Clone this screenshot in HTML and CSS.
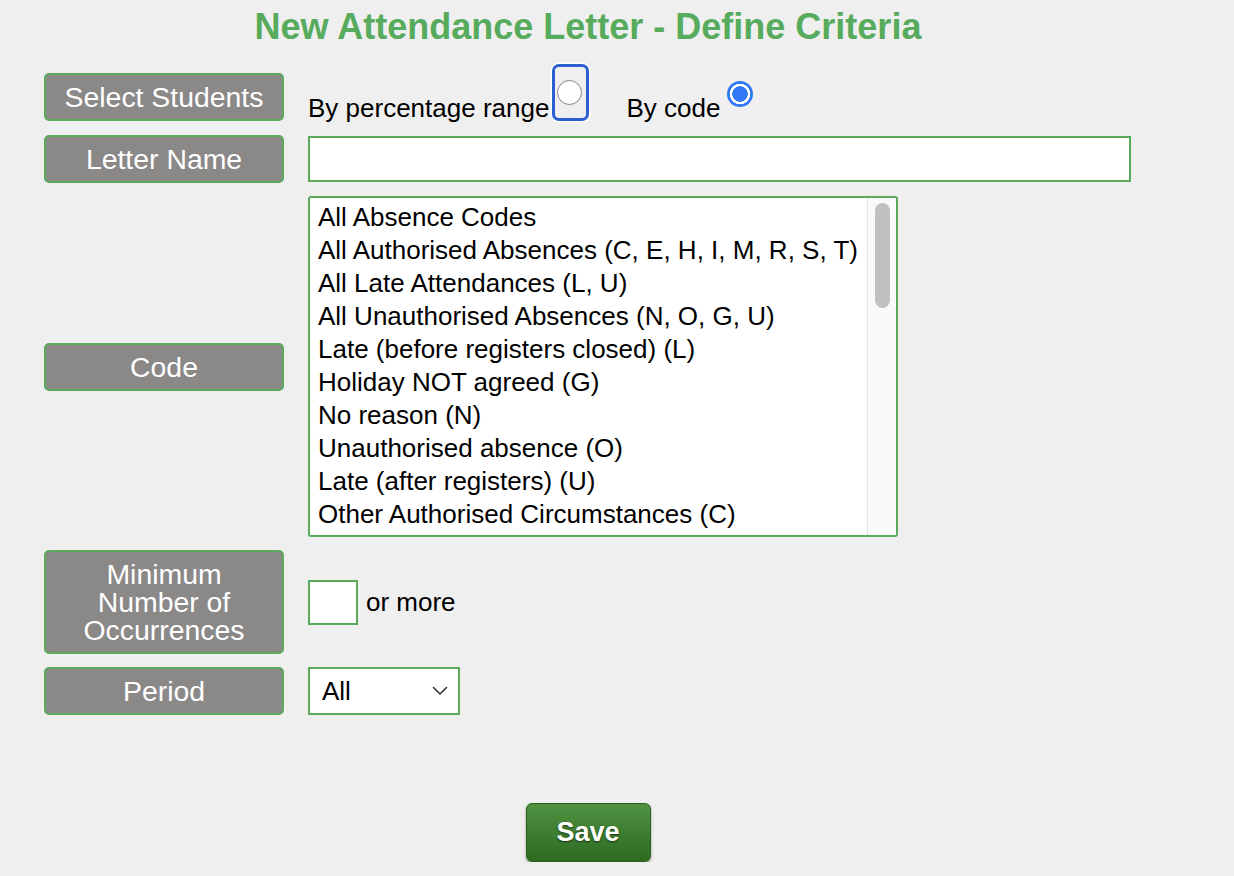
FILE: index.html
```html
<!DOCTYPE html>
<html lang="en">
<head>
<meta charset="utf-8">
<title>New Attendance Letter - Define Criteria</title>
<link rel="stylesheet" href="styles.css">
</head>
<body>
<div class="page">
  <h1 class="title">New Attendance Letter - Define Criteria</h1>
  <div class="form">
    <div class="label first">Select Students</div>
    <div class="field radios first">
      <span class="opt-text">By percentage range</span>
      <span class="focus-ring"><span class="radio"></span></span>
      <span class="opt-text second">By code</span>
      <span class="radio checked"></span>
    </div>

    <div class="label">Letter Name</div>
    <div class="field"><div class="text-input wide"></div></div>

    <div class="label">Code</div>
    <div class="field">
      <div class="listbox">
        <div class="options">
          <div class="option">All Absence Codes</div>
          <div class="option">All Authorised Absences (C, E, H, I, M, R, S, T)</div>
          <div class="option">All Late Attendances (L, U)</div>
          <div class="option">All Unauthorised Absences (N, O, G, U)</div>
          <div class="option">Late (before registers closed) (L)</div>
          <div class="option">Holiday NOT agreed (G)</div>
          <div class="option">No reason (N)</div>
          <div class="option">Unauthorised absence (O)</div>
          <div class="option">Late (after registers) (U)</div>
          <div class="option">Other Authorised Circumstances (C)</div>
        </div>
        <div class="scrollbar"><div class="thumb"></div></div>
      </div>
    </div>

    <div class="label">Minimum<br>Number of<br>Occurrences</div>
    <div class="field inline">
      <div class="text-input small"></div>
      <span class="suffix">or more</span>
    </div>

    <div class="label">Period</div>
    <div class="field">
      <div class="select">
        <span>All</span>
        <svg class="chevron" width="16" height="10" viewBox="0 0 16 10"><path d="M1.5 1.5l6.5 6.5 6.5-6.5" fill="none" stroke="#333" stroke-width="1.6" stroke-linecap="round" stroke-linejoin="round"/></svg>
      </div>
    </div>
  </div>
  <div class="actions">
    <button class="save" type="button">Save</button>
  </div>
</div>
</body>
</html>
```

FILE: styles.css
```css
body {
  margin: 0;
  background: #efefef;
  font-family: "Liberation Sans", Arial, Helvetica, sans-serif;
  color: #000;
}

.page {
  width: 1176px;
  padding-top: 6px;
}

.title {
  margin: 0;
  text-align: center;
  font-size: 36px;
  line-height: 41px;
  font-weight: bold;
  color: #57ab5d;
}

.form {
  margin: 26px 0 0 44px;
  display: grid;
  grid-template-columns: 240px auto;
  column-gap: 24px;
  row-gap: 13px;
  align-items: center;
}

.first {
  margin-bottom: 1px;
}

.label {
  box-sizing: border-box;
  background: #8b8888;
  border: 2px solid #5bab5f;
  border-radius: 5px;
  color: #fff;
  font-size: 28.4px;
  line-height: 28px;
  padding: 8px 2px;
  text-align: center;
}

.field {
  font-size: 26px;
  line-height: 30px;
}

.radios {
  display: flex;
  align-items: flex-start;
  height: 48px;
}

.opt-text {
  margin-top: 20px;
  white-space: nowrap;
}

.opt-text.second {
  margin-left: 37px;
}

.focus-ring {
  box-sizing: border-box;
  width: 37px;
  height: 57px;
  margin: -9px 0 0 3px;
  padding: 13px 0 0 2px;
  border: 3px solid #2c5fcf;
  border-radius: 7px;
  box-shadow: 0 0 0 1.5px #fff;
}

.radio {
  display: block;
  box-sizing: border-box;
  width: 25px;
  height: 25px;
  border: 1.5px solid #858585;
  border-radius: 50%;
  background: #fff;
}

.radio.checked {
  width: 26px;
  height: 26px;
  margin: 8px 0 0 7px;
  border: none;
  background: radial-gradient(circle, #3078f5 0 7.5px, #fff 8px 10px, #3078f5 10.5px);
}

.text-input {
  box-sizing: border-box;
  background: #fff;
  border: 2px solid #5bab5f;
}

.text-input.wide {
  width: 823px;
  height: 46px;
}

.text-input.small {
  width: 50px;
  height: 45px;
}

.inline {
  display: flex;
  align-items: center;
}

.suffix {
  margin-left: 8px;
}

.listbox {
  box-sizing: border-box;
  width: 590px;
  height: 341px;
  border: 2px solid #5bab5f;
  border-radius: 3px;
  background: #fff;
  display: flex;
  overflow: hidden;
}

.options {
  flex: 1;
  padding: 3px 0 0 8px;
  overflow: hidden;
}

.option {
  line-height: 33px;
  white-space: nowrap;
}

.scrollbar {
  width: 29px;
  background: #fafafa;
  border-left: 1px solid #e4e4e4;
  padding: 5px 0 0 7px;
  box-sizing: border-box;
}

.thumb {
  width: 15px;
  height: 105px;
  border-radius: 8px;
  background: #c1c1c1;
}

.select {
  box-sizing: border-box;
  width: 152px;
  height: 48px;
  border: 2px solid #5bab5f;
  background: #fff;
  display: flex;
  align-items: center;
  justify-content: space-between;
  padding: 0 10px 0 12px;
}

.chevron {
  display: block;
}

.actions {
  display: flex;
  justify-content: center;
  margin-top: 88px;
}

.save {
  width: 125px;
  height: 59px;
  border: 1px solid #2a5f1f;
  border-radius: 6px;
  background: linear-gradient(#4f9141, #2d6b21);
  color: #fff;
  font-family: "Liberation Sans", Arial, Helvetica, sans-serif;
  font-size: 27px;
  font-weight: bold;
  text-shadow: 0 1px 2px rgba(0, 0, 0, 0.6);
  box-shadow: 0 2px 3px rgba(0, 0, 0, 0.35);
  cursor: pointer;
}
```
